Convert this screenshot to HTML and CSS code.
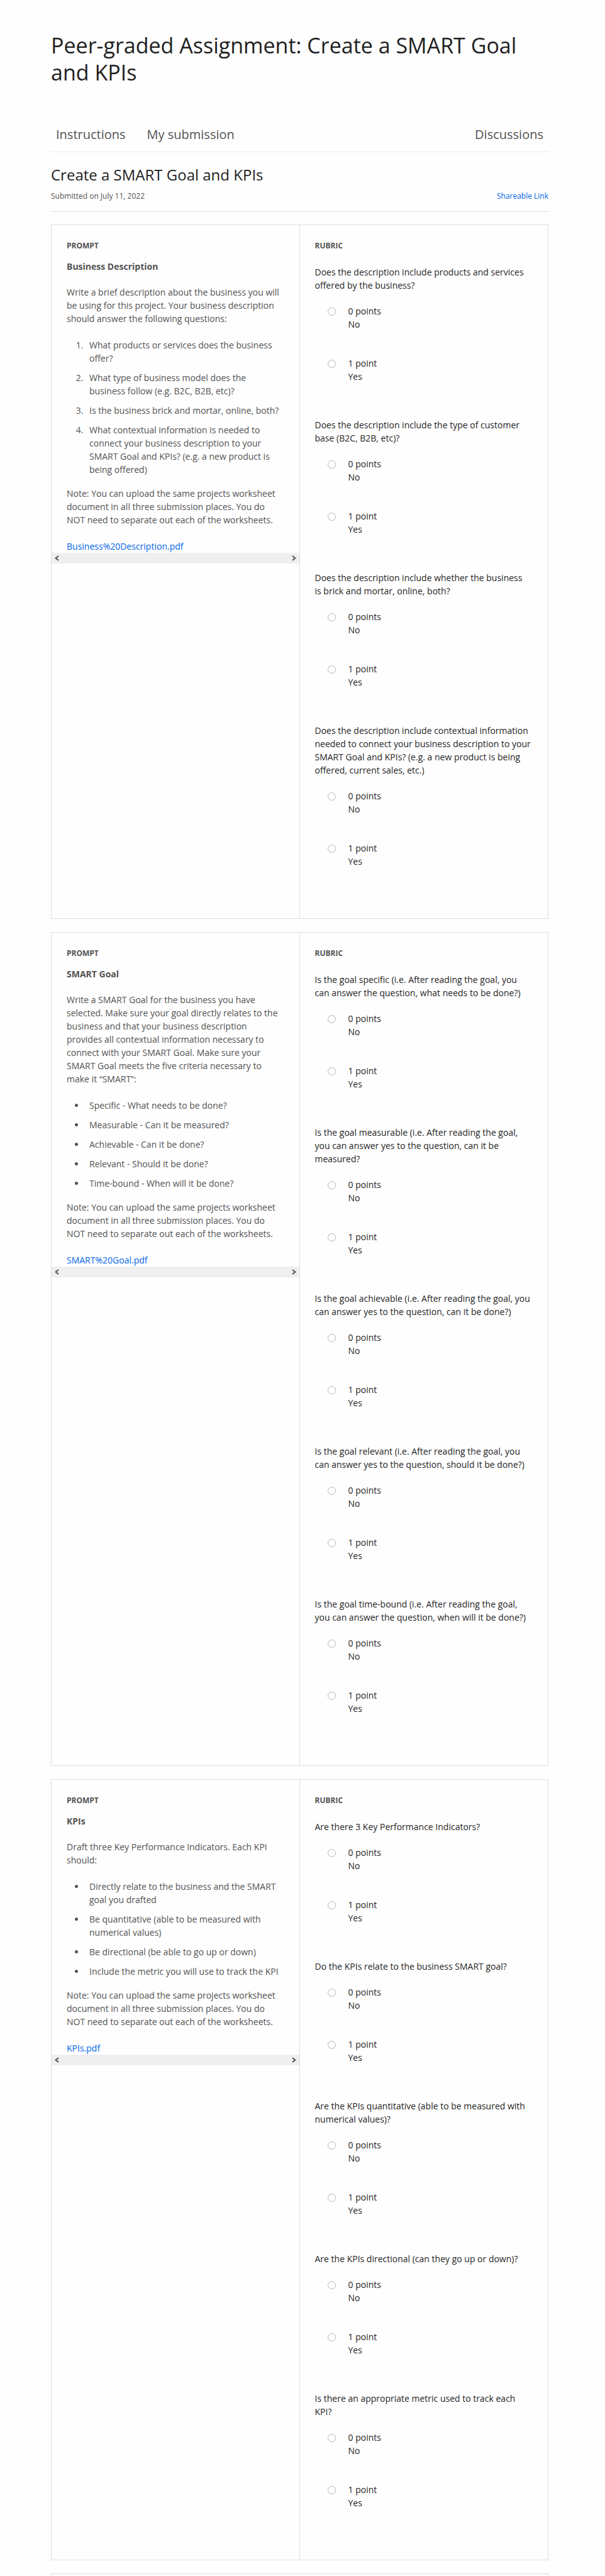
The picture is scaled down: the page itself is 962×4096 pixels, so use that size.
FILE: index.html
```html
<!DOCTYPE html>
<html lang="en">
<head>
<meta charset="utf-8">
<meta name="viewport" content="width=device-width, initial-scale=1">
<title>Peer-graded Assignment: Create a SMART Goal and KPIs</title>
<link rel="stylesheet" href="styles.css">
</head>
<body>
<main class="page">
  <h1 class="page-title">Peer-graded Assignment: Create a SMART Goal and KPIs</h1>
  <nav class="tabs">
    <a class="tab" href="#instructions">Instructions</a>
    <a class="tab" href="#submission">My submission</a>
    <a class="tab tab-end" href="#discussions">Discussions</a>
  </nav>
  <header class="submission-head">
    <h2 class="submission-title">Create a SMART Goal and KPIs</h2>
    <div class="submission-meta">
      <span class="meta-date">Submitted on July 11, 2022</span>
      <a class="link" href="#share">Shareable Link</a>
    </div>
  </header>

  <div class="cards">
    <section class="card">
      <div class="prompt">
        <div class="prompt-body">
          <h3 class="label">PROMPT</h3>
          <h4 class="prompt-title">Business Description</h4>
          <p class="text">Write a brief description about the business you will be using for this project. Your business description should answer the following questions:</p>
          <ol class="list">
            <li>What products or services does the business offer?</li>
            <li>What type of business model does the business follow (e.g. B2C, B2B, etc)?</li>
            <li>Is the business brick and mortar, online, both?</li>
            <li>What contextual information is needed to connect your business description to your SMART Goal and KPIs? (e.g. a new product is being offered)</li>
          </ol>
          <p class="note">Note: You can upload the same projects worksheet document in all three submission places. You do NOT need to separate out each of the worksheets.</p>
          <a class="link file" href="#business-description">Business%20Description.pdf</a>
        </div>
        <div class="scroller">
          <button class="scroll-btn" type="button" aria-label="Scroll left"><svg width="7" height="9" viewBox="0 0 7 9"><path d="M6 1 1.500 4.500 6 8"/></svg></button>
          <button class="scroll-btn" type="button" aria-label="Scroll right"><svg width="7" height="9" viewBox="0 0 7 9"><path d="M1 1 5.500 4.500 1 8"/></svg></button>
        </div>
      </div>
      <div class="rubric">
        <h3 class="label">RUBRIC</h3>
        <fieldset class="question"><legend>Does the description include products and services offered by the business?</legend>
          <label class="option"><input type="radio" name="a1"><span>0 points<br>No</span></label>
          <label class="option"><input type="radio" name="a1"><span>1 point<br>Yes</span></label></fieldset>
        <fieldset class="question"><legend>Does the description include the type of customer base (B2C, B2B, etc)?</legend>
          <label class="option"><input type="radio" name="a2"><span>0 points<br>No</span></label>
          <label class="option"><input type="radio" name="a2"><span>1 point<br>Yes</span></label></fieldset>
        <fieldset class="question"><legend>Does the description include whether the business is&nbsp;brick and mortar, online, both?</legend>
          <label class="option"><input type="radio" name="a3"><span>0 points<br>No</span></label>
          <label class="option"><input type="radio" name="a3"><span>1 point<br>Yes</span></label></fieldset>
        <fieldset class="question"><legend>Does the description include contextual information needed to connect your business description to your SMART Goal and KPIs? (e.g. a new product is being offered, current sales, etc.)</legend>
          <label class="option"><input type="radio" name="a4"><span>0 points<br>No</span></label>
          <label class="option"><input type="radio" name="a4"><span>1 point<br>Yes</span></label></fieldset>
      </div>
    </section>

    <section class="card">
      <div class="prompt">
        <div class="prompt-body">
          <h3 class="label">PROMPT</h3>
          <h4 class="prompt-title">SMART Goal</h4>
          <p class="text">Write a SMART Goal for the business you have selected. Make sure your goal directly relates to the business and that your business description provides all contextual information necessary to connect with your SMART Goal. Make sure your SMART Goal meets the five criteria necessary to make it “SMART”:</p>
          <ul class="list">
            <li>Specific - What needs to be done?</li>
            <li>Measurable - Can it be measured?</li>
            <li>Achievable - Can it be done?</li>
            <li>Relevant - Should it be done?</li>
            <li>Time-bound - When will it be done?</li>
          </ul>
          <p class="note">Note: You can upload the same projects worksheet document in all three submission places. You do NOT need to separate out each of the worksheets.</p>
          <a class="link file" href="#smart-goal">SMART%20Goal.pdf</a>
        </div>
        <div class="scroller">
          <button class="scroll-btn" type="button" aria-label="Scroll left"><svg width="7" height="9" viewBox="0 0 7 9"><path d="M6 1 1.500 4.500 6 8"/></svg></button>
          <button class="scroll-btn" type="button" aria-label="Scroll right"><svg width="7" height="9" viewBox="0 0 7 9"><path d="M1 1 5.500 4.500 1 8"/></svg></button>
        </div>
      </div>
      <div class="rubric">
        <h3 class="label">RUBRIC</h3>
        <fieldset class="question"><legend>Is the goal specific (i.e. After reading the goal, you can answer the question, what needs to be done?)</legend>
          <label class="option"><input type="radio" name="b1"><span>0 points<br>No</span></label>
          <label class="option"><input type="radio" name="b1"><span>1 point<br>Yes</span></label></fieldset>
        <fieldset class="question"><legend>Is the goal measurable (i.e. After reading the goal, you can answer yes to the question, can it be measured?</legend>
          <label class="option"><input type="radio" name="b2"><span>0 points<br>No</span></label>
          <label class="option"><input type="radio" name="b2"><span>1 point<br>Yes</span></label></fieldset>
        <fieldset class="question"><legend>Is the goal achievable (i.e. After reading the goal, you can answer yes to the question, can it be done?)</legend>
          <label class="option"><input type="radio" name="b3"><span>0 points<br>No</span></label>
          <label class="option"><input type="radio" name="b3"><span>1 point<br>Yes</span></label></fieldset>
        <fieldset class="question"><legend>Is the goal relevant (i.e. After reading the goal, you can answer yes to the question, should it be done?)</legend>
          <label class="option"><input type="radio" name="b4"><span>0 points<br>No</span></label>
          <label class="option"><input type="radio" name="b4"><span>1 point<br>Yes</span></label></fieldset>
        <fieldset class="question"><legend>Is the goal time-bound (i.e. After reading the goal, you can answer the question, when will it be done?)</legend>
          <label class="option"><input type="radio" name="b5"><span>0 points<br>No</span></label>
          <label class="option"><input type="radio" name="b5"><span>1 point<br>Yes</span></label></fieldset>
      </div>
    </section>

    <section class="card">
      <div class="prompt">
        <div class="prompt-body">
          <h3 class="label">PROMPT</h3>
          <h4 class="prompt-title">KPIs</h4>
          <p class="text">Draft three Key Performance Indicators. Each KPI should:</p>
          <ul class="list">
            <li>Directly relate to the business and the SMART goal you drafted</li>
            <li>Be quantitative (able to be measured with numerical values)</li>
            <li>Be directional (be able to go up or down)</li>
            <li>Include the metric you will use to track the KPI</li>
          </ul>
          <p class="note">Note: You can upload the same projects worksheet document in all three submission places. You do NOT need to separate out each of the worksheets.</p>
          <a class="link file" href="#kpis">KPIs.pdf</a>
        </div>
        <div class="scroller">
          <button class="scroll-btn" type="button" aria-label="Scroll left"><svg width="7" height="9" viewBox="0 0 7 9"><path d="M6 1 1.500 4.500 6 8"/></svg></button>
          <button class="scroll-btn" type="button" aria-label="Scroll right"><svg width="7" height="9" viewBox="0 0 7 9"><path d="M1 1 5.500 4.500 1 8"/></svg></button>
        </div>
      </div>
      <div class="rubric">
        <h3 class="label">RUBRIC</h3>
        <fieldset class="question"><legend>Are there 3 Key Performance Indicators?</legend>
          <label class="option"><input type="radio" name="c1"><span>0 points<br>No</span></label>
          <label class="option"><input type="radio" name="c1"><span>1 point<br>Yes</span></label></fieldset>
        <fieldset class="question"><legend>Do the KPIs relate to the business SMART goal?</legend>
          <label class="option"><input type="radio" name="c2"><span>0 points<br>No</span></label>
          <label class="option"><input type="radio" name="c2"><span>1 point<br>Yes</span></label></fieldset>
        <fieldset class="question"><legend>Are the KPIs quantitative (able to be measured with numerical values)?</legend>
          <label class="option"><input type="radio" name="c3"><span>0 points<br>No</span></label>
          <label class="option"><input type="radio" name="c3"><span>1 point<br>Yes</span></label></fieldset>
        <fieldset class="question"><legend>Are the KPIs directional (can they go up or down)?</legend>
          <label class="option"><input type="radio" name="c4"><span>0 points<br>No</span></label>
          <label class="option"><input type="radio" name="c4"><span>1 point<br>Yes</span></label></fieldset>
        <fieldset class="question"><legend>Is there an appropriate metric used to track each KPI?</legend>
          <label class="option"><input type="radio" name="c5"><span>0 points<br>No</span></label>
          <label class="option"><input type="radio" name="c5"><span>1 point<br>Yes</span></label></fieldset>
      </div>
    </section>

    <div class="card card-cut"></div>
  </div>
</main>
</body>
</html>
```

FILE: styles.css
```css
* {
  box-sizing: border-box;
}

body {
  margin: 0;
  background: #fefefe;
  color: #1f1f1f;
  font: 14px/21px "Open Sans", "Noto Sans", sans-serif;
}

h1, h2, h3, h4, p, ol, ul {
  margin: 0;
  padding: 0;
}

.page {
  padding: 51px 90px 0 81px;
}

.page-title {
  font-size: 34px;
  line-height: 43px;
  font-weight: 400;
}

.tabs {
  display: flex;
  gap: 34px;
  margin-top: 63px;
  padding: 0 8px 13px;
  border-bottom: 1px solid #e9e9e9;
}

.tab {
  color: #525252;
  font-size: 20px;
  line-height: 28px;
  text-decoration: none;
}

.tab-end {
  margin-left: auto;
}

.submission-head {
  padding: 20px 0 15px;
  border-bottom: 1px solid #dddddd;
}

.submission-title {
  font-size: 24px;
  line-height: 32px;
  font-weight: 400;
}

.submission-meta {
  display: flex;
  justify-content: space-between;
  margin-top: 9px;
  font-size: 12px;
  line-height: 18px;
}

.meta-date {
  color: #525252;
}

.link {
  color: #0065e8;
  text-decoration: none;
}

.cards {
  display: flex;
  flex-direction: column;
  gap: 21px;
  margin-top: 20px;
}

.card {
  display: grid;
  grid-template-columns: 1fr 1fr;
  border: 1px solid #dedede;
}

.card-cut {
  height: 4px;
  border-bottom: 0;
}

.prompt {
  color: #525252;
  border-right: 1px solid #dedede;
}

.prompt-body {
  padding: 24px 24px 0;
}

.label {
  color: #525252;
  font-size: 12px;
  line-height: 18px;
  font-weight: 700;
}

.prompt-title {
  margin-top: 13px;
  font-size: 14px;
  font-weight: 700;
}

.text {
  margin-top: 20px;
}

.list {
  display: flex;
  flex-direction: column;
  gap: 10px;
  margin-top: 21px;
  padding-left: 30px;
}

.list li {
  padding-left: 6px;
}

.note {
  margin-top: 17px;
}

.file {
  display: block;
  margin-top: 21px;
}

.scroller {
  display: flex;
  justify-content: space-between;
  background: #efefef;
}

.scroll-btn {
  display: flex;
  align-items: center;
  justify-content: center;
  width: 16px;
  height: 17px;
  padding: 0;
  border: 0;
  background: none;
}

.scroll-btn path {
  fill: none;
  stroke: #505050;
  stroke-width: 2;
}

.rubric {
  padding: 24px 24px 24px;
}

.question {
  min-width: 0;
  margin: 0 0 56px;
  padding: 0;
  border: 0;
}

.label + .question {
  margin-top: 22px;
}

.question:last-child {
  margin-bottom: 0;
  padding-bottom: 56px;
}

.question legend {
  margin-bottom: 20px;
  padding: 0;
}

.option {
  display: flex;
  gap: 20px;
  padding-left: 20px;
}

.option + .option {
  margin-top: 41px;
}

.option input {
  flex: none;
  width: 13px;
  height: 13px;
  margin: 5px 0 0;
  appearance: none;
  border: 1px solid #b4b4bc;
  border-radius: 50%;
  background: #ffffff;
}
```
